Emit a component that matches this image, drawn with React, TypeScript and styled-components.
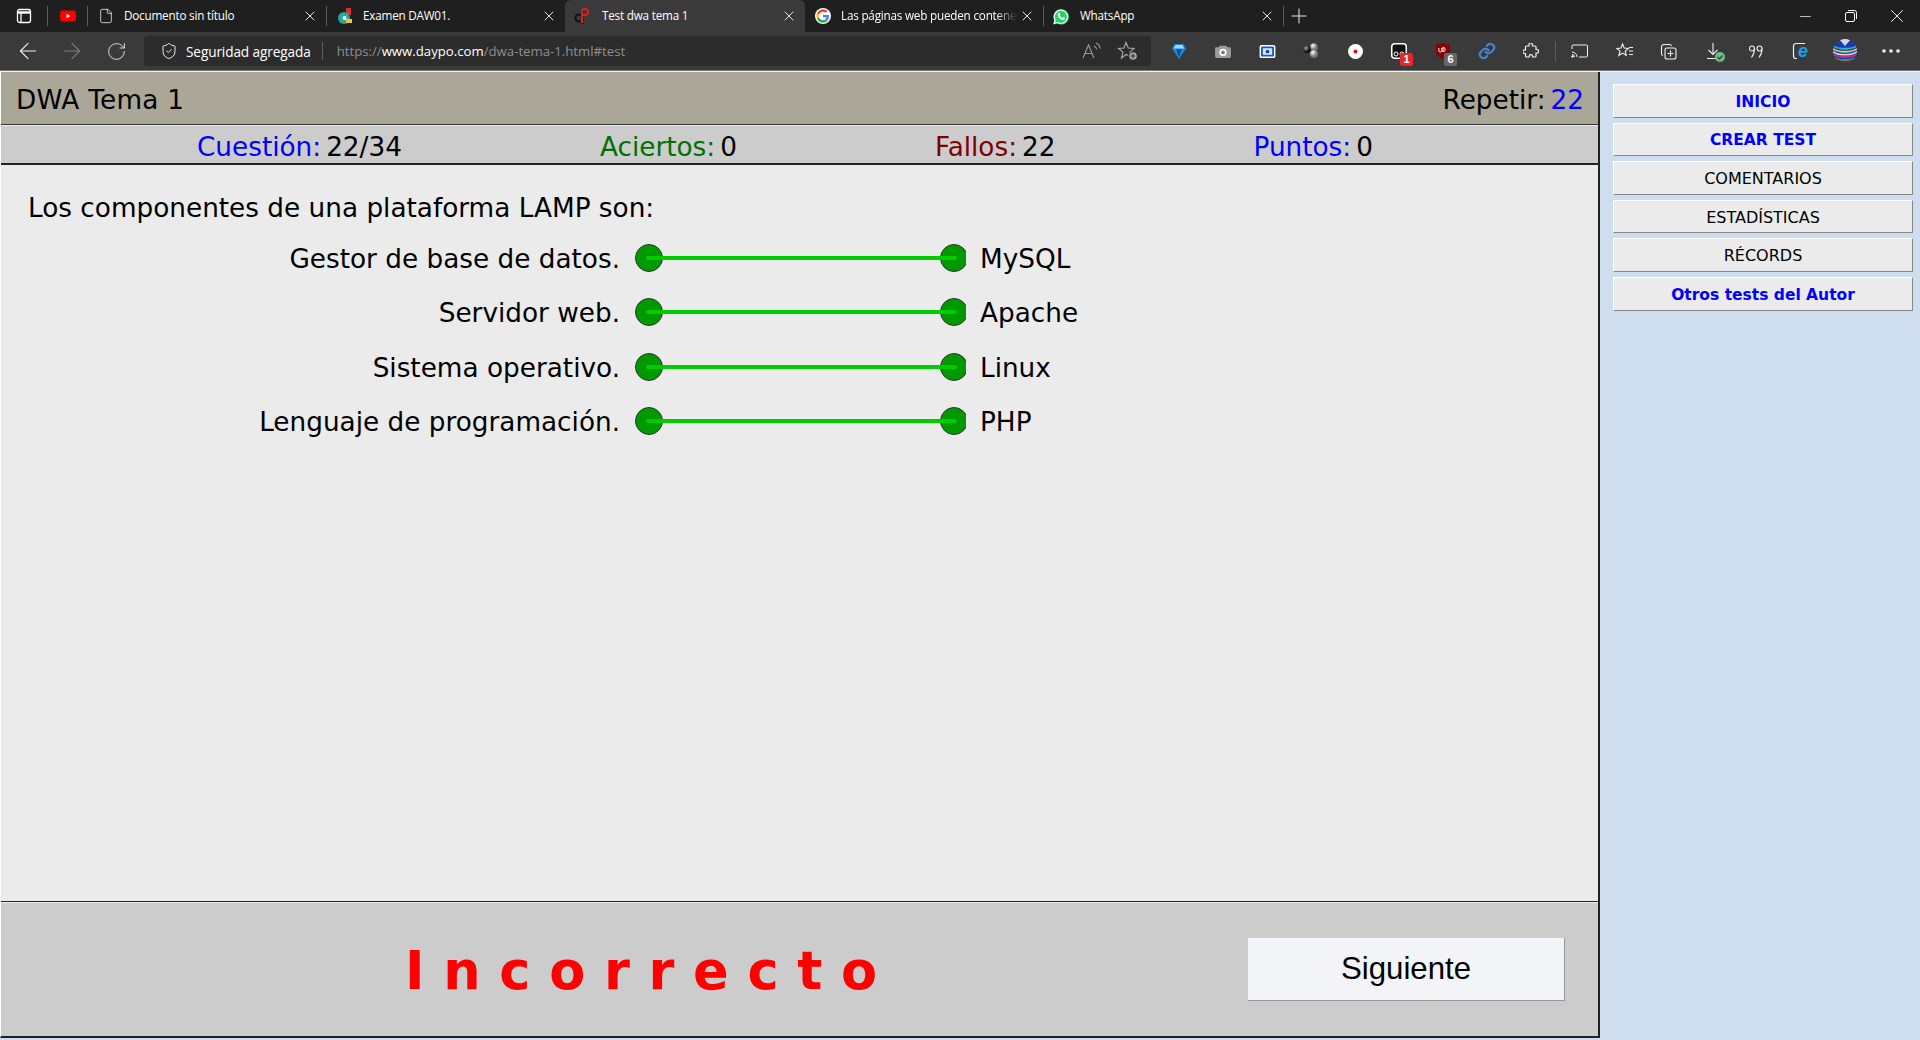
import React from "react";
import styled, { createGlobalStyle } from "styled-components";
import { ArrowLeft, ArrowRight, RotateCw, ShieldCheck, File, X, Plus, Minus, MoreHorizontal } from "lucide-react";

const Global = createGlobalStyle`
  html, body { margin: 0; padding: 0; height: 1040px; overflow: hidden; background: #cfdeee; }
  #root { height: 1040px; }
  * { box-sizing: border-box; }
`;

const Shell = styled.div`
  width: 1920px; height: 1040px; display: flex; flex-direction: column;
  font-family: "Open Sans", "Noto Sans", sans-serif;
`;

/* ---------- tab strip ---------- */
const TabStrip = styled.div`
  height: 32px; background: #1f1f1f; display: flex; align-items: stretch; color: #fff; flex: none;
`;
const StripIcon = styled.div<{ $w: number }>`
  width: ${p => p.$w}px; display: flex; align-items: center; justify-content: center; flex: none;
`;
const Sep = styled.div`
  width: 1px; height: 20px; background: #5c5c5c; align-self: center; flex: none;
`;
const Tab = styled.div<{ $w: number; $active?: boolean; $pad: number }>`
  width: ${p => p.$w}px; flex: none; display: flex; align-items: center; padding-left: ${p => p.$pad}px;
  background: ${p => (p.$active ? "#3a3a3a" : "transparent")};
  border-radius: ${p => (p.$active ? "6px 6px 0 0" : "0")};
`;
const TabIcon = styled.div`
  width: 16px; height: 16px; flex: none; display: flex; align-items: center; justify-content: center;
`;
const TabTitle = styled.div<{ $gap: number; $fade?: boolean }>`
  margin-left: ${p => p.$gap}px; flex: 1; min-width: 0; font-size: 11.7px; line-height: 16px; letter-spacing: -0.2px; color: #fff; white-space: nowrap; overflow: hidden;
  padding-bottom: 2px;
  ${p => (p.$fade ? "margin-right: -6px; -webkit-mask-image: linear-gradient(90deg,#000 88%,transparent 100%);" : "")}
`;
const TabClose = styled.div`
  width: 32px; flex: none; display: flex; align-items: center; justify-content: center; color: #e6e6e6;
`;
const NewTab = styled.div`
  width: 30px; display: flex; align-items: center; justify-content: center; flex: none;
`;
const WinControls = styled.div`
  margin-left: auto; display: flex; align-items: center; flex: none;
`;
const WinBtn = styled.div`
  width: 46px; height: 32px; display: flex; align-items: center; justify-content: center; color: #fff;
`;

/* ---------- toolbar ---------- */
const Toolbar = styled.div`
  height: 38px; background: #3a3a3a; display: flex; align-items: flex-start; padding: 4px 0 0 6px; flex: none;
`;
const ToolBtn = styled.div<{ $dim?: boolean; $nudge?: number }>`
  width: 44px; height: 30px; flex: none; display: flex; align-items: center; justify-content: center;
  color: ${p => (p.$dim ? "#7d7d7d" : "#f0f0f0")}; position: relative;
  padding-left: ${p => Math.max(p.$nudge ?? 0, 0)}px;
  padding-right: ${p => Math.max(-(p.$nudge ?? 0), 0)}px;
`;
const AddressBar = styled.div`
  width: 1007px; height: 30px; margin: 0 6px; background: #2c2c2c; border-radius: 4px; display: flex; align-items: center;
  padding-left: 16px; flex: none;
`;
const AddressSecurity = styled.span`
  color: #fff; font-size: 13.6px; letter-spacing: -0.1px; margin-left: 8px; white-space: nowrap;
`;
const AddressSep = styled.div`
  width: 1px; height: 18px; background: #5e5e5e; margin: 0 14px 0 11px; flex: none;
`;
const Url = styled.span`
  color: #8f8f8f; font-size: 13.2px; white-space: nowrap;
  b { color: #fff; font-weight: 400; }
`;
const AddressEnd = styled.div`
  margin-left: auto; display: flex; align-items: center; color: #9a9a9a; padding-right: 5px;
`;
const AddressIcon = styled.div`
  width: 36px; height: 30px; display: flex; align-items: center; justify-content: center;
`;
const ToolSep = styled.div`
  width: 1px; height: 20px; background: #5c5c5c; margin: 5px 3px 0 2px; flex: none;
`;
const Badge = styled.span<{ $bg: string }>`
  position: absolute; right: 8px; bottom: 0; width: 13px; height: 13px; background: ${p => p.$bg}; color: #fff;
  font: 700 11px/13px "Liberation Sans", sans-serif; text-align: center; border-radius: 2px;
`;
const DoneMark = styled.svg`
  position: absolute; right: 10px; bottom: 4px;
`;
const ChromeEdge = styled.div`
  height: 2px; flex: none; background: #f2f2f2; border-top: 1px solid #777;
`;

/* ---------- page ---------- */
const Page = styled.div`
  flex: 1; min-height: 0; display: flex; background: #cfdeee; font-family: "DejaVu Sans", Verdana, sans-serif; color: #000;
`;
const Test = styled.main`
  width: 1600px; flex: none; display: flex; flex-direction: column; height: 966px;
  border-left: 1px solid #fff; border-right: 2px solid #222; border-bottom: 2px solid #222;
`;
const TitleBar = styled.header`
  height: 53px; flex: none; background: #aba798; border-bottom: 1px solid #333; display: flex; align-items: center;
  justify-content: space-between; padding: 4px 14px 0 15px; font-size: 26.3px; line-height: 1;
`;
const Label = styled.span<{ $c: string }>`
  color: ${p => p.$c}; margin-right: 5px;
`;
const TitleText = styled.span`
  letter-spacing: 0.25px;
`;
const RepeatBox = styled.span``;
const Repeat = styled.span`
  color: #0000ff;
`;
const StatsBar = styled.div`
  height: 40px; flex: none; background: #ccc; border-top: 1px solid #eee; border-bottom: 2px solid #222; display: flex; align-items: center;
  gap: 198px; padding: 5px 0 0 196px; font-size: 26.3px; white-space: nowrap;
`;
const Stat = styled.span``;
const Content = styled.section`
  flex: 1; min-height: 0; background: #ebebeb; padding: 25px 0 0 27px; font-size: 26.3px; line-height: 36px;
`;
const Question = styled.div`
  height: 36px;
`;
const Pairs = styled.div`
  margin: 14.5px 0 0 -27px; display: flex; flex-direction: column; gap: 18.5px;
`;
const Pair = styled.div`
  display: flex; align-items: center; height: 36px;
`;
const PairLeft = styled.div`
  width: 619px; text-align: right; flex: none; white-space: nowrap;
`;
const PairRight = styled.div`
  margin-left: 14px; white-space: nowrap;
`;
const Connector = styled.svg`
  width: 332px; height: 30px; margin-left: 14px; flex: none; display: block; transform: translateY(-1px);
`;
const Footer = styled.footer`
  height: 135px; flex: none; background: #ccc; border-top: 1px solid #222; display: flex; align-items: center;
  padding-right: 33px; box-shadow: inset 0 1px 0 #eee;
`;
const Verdict = styled.div`
  flex: 1; padding: 4px 0 0 404px; color: #ff0000; font: 700 52.5px/1 "DejaVu Sans", sans-serif; letter-spacing: 18.7px; white-space: nowrap;
`;
const Next = styled.div`
  width: 317px; height: 63px; margin-top: 1px; background: #f2f4f8; border-right: 1px solid #999; border-bottom: 1px solid #999;
  display: flex; align-items: center; justify-content: center; font: 400 31.2px "Liberation Sans", sans-serif; color: #000;
`;
const Sidebar = styled.nav`
  flex: 1; display: flex; flex-direction: column; gap: 5px; padding: 12px 7px 0 13px;
`;
const MenuButton = styled.div<{ $strong?: boolean; $h: number }>`
  height: ${p => p.$h}px; background: #ebebeb; border-top: 1px solid #fff; border-left: 1px solid #fff;
  border-right: 1px solid #888; border-bottom: 1px solid #888; padding-top: 1px;
  display: flex; align-items: center; justify-content: center;
  font-size: ${p => (p.$strong ? "15.5px" : "16px")};
  color: ${p => (p.$strong ? "#0000ff" : "#000")}; font-weight: ${p => (p.$strong ? 700 : 400)};
`;

/* ---------- small drawn logos ---------- */
const SidebarToggle = () => (
  <svg width="16" height="16" viewBox="0 0 16 16" fill="none" stroke="#fff" strokeWidth="1.3">
    <rect x="1.500" y="1.500" width="13" height="13" rx="2" /><path d="M1.500 4.500h13" strokeWidth="2.400" /><path d="M5 5v9" />
  </svg>
);
const YouTube = () => (
  <svg width="16" height="16" viewBox="0 0 16 16">
    <rect x="0" y="2.500" width="16" height="11" rx="3" fill="#f00" /><path d="M6.500 5.700v4.600l4-2.300z" fill="#fff" />
  </svg>
);
const Moodle = () => (
  <svg width="16" height="16" viewBox="0 0 16 16">
    <path d="M9 0h5v7H9z" fill="#d62f2f" /><circle cx="7" cy="10" r="6" fill="#25a79a" />
    <circle cx="7.500" cy="10" r="2" fill="#fff" /><path d="M9 11h6v4H9z" fill="#f4c430" />
  </svg>
);
const DaypoLogo = () => (
  <svg width="16" height="18" viewBox="0 0 16 18" fill="none">
    <circle cx="5" cy="11" r="3.500" stroke="#111" strokeWidth="2" /><path d="M8.500 3v14" stroke="#111" strokeWidth="1.800" />
    <circle cx="11" cy="5" r="3.200" stroke="#e01b24" strokeWidth="2" /><path d="M8 5v11" stroke="#e01b24" strokeWidth="2" />
  </svg>
);
const GoogleLogo = () => (
  <svg width="16" height="16" viewBox="0 0 48 48">
    <circle cx="24" cy="24" r="24" fill="#fff" />
    <path fill="#ea4335" d="M24 11c3.300 0 6.300 1.200 8.600 3.300l5-5A20 20 0 0 0 6.100 15l6 4.600C13.700 14.600 18.400 11 24 11z" />
    <path fill="#4285f4" d="M42 24.500c0-1.400-.1-2.400-.4-3.500H24v7h10.200c-.5 2.300-1.900 4.300-4 5.600l6 4.600C40 35.100 42 30.200 42 24.500z" />
    <path fill="#fbbc05" d="M12.100 28.400a11.800 11.800 0 0 1 0-8.800l-6-4.600a20 20 0 0 0 0 18z" />
    <path fill="#34a853" d="M24 44c5.400 0 9.900-1.800 13.200-4.800l-6.400-5c-1.800 1.200-4 1.900-6.800 1.900-5.600 0-10.300-3.600-11.900-8.600l-6 4.600A20 20 0 0 0 24 44z" />
  </svg>
);
const WhatsApp = () => (
  <svg width="17" height="17" viewBox="0 0 16 16">
    <path d="M0 16l1.200-4.200A7.800 7.800 0 1 1 4.200 15z" fill="#25d366" />
    <path d="M1.300 14.700l.9-3A6.600 6.600 0 1 1 4.500 14z" fill="#25d366" stroke="#fff" strokeWidth="1.100" />
    <path d="M5.600 4.300c-.7.600-1 1.500-.7 2.600.6 2.100 2.200 3.800 4.300 4.500 1.100.3 2 0 2.600-.8l.1-1.100-1.800-.9-.8.900c-1.100-.4-2.100-1.400-2.600-2.500l.7-.8L6.600 4.300z" fill="#fff" />
  </svg>
);
const ReadAloud = () => (
  <svg width="22" height="20" viewBox="0 0 22 20" fill="none" stroke="#9a9a9a" strokeWidth="1.100">
    <path d="M2 17 7.500 4 13 17M4 12.500h7" /><path d="M13 5c1.500.6 2.500 2 2.800 3.500M15 2c2.300 1 3.800 3 4.200 5.500" />
  </svg>
);
const FavAdd = () => (
  <svg width="22" height="22" viewBox="0 0 22 22" fill="none" stroke="#a8a8a8" strokeWidth="1.100">
    <path d="M9 2.500 11.300 8l5.700.4-4.300 3.700 1.200 4.400L9 14.500 4.400 18l1.500-5.800L1.500 8.400 7 8z" />
    <circle cx="16" cy="16" r="4.300" fill="#a8a8a8" stroke="#2c2c2c" /><path d="M16 13.800v4.400M13.800 16h4.400" stroke="#2c2c2c" />
  </svg>
);
const Diamond = () => (
  <svg width="14" height="16" viewBox="0 0 16 18"><path d="M3 1h10l3 5-8 12L0 6z" fill="#1e88d8" /><path d="M4 2h8l2 4H2z" fill="#9adcf8" /><path d="M5 7h6l-3 9z" fill="#0b4d9e" /></svg>
);
const Camera = () => (
  <svg width="16" height="14" viewBox="0 0 17 15"><path d="M5 2h7l1 1.500h2.500A1.500 1.500 0 0 1 17 5v8.500A1.500 1.500 0 0 1 15.500 15h-14A1.500 1.500 0 0 1 0 13.500V5a1.500 1.500 0 0 1 1.500-1.500H4z" fill="#9c9c9c" /><circle cx="8.500" cy="9" r="3.800" fill="#fff" /><circle cx="8.500" cy="9" r="2" fill="#777" /></svg>
);
const BlueScreen = () => (
  <svg width="17" height="13" viewBox="0 0 17 14"><rect width="17" height="14" rx="2" fill="#fff" /><rect x="1.500" y="1.500" width="14" height="11" rx="1" fill="#1558d6" /><rect x="3.500" y="3.500" width="10" height="7" fill="#dbe7ff" /><circle cx="8.500" cy="7" r="2" fill="#1140b8" /></svg>
);
const Balls = () => (
  <svg width="18" height="16" viewBox="0 0 18 16"><defs><radialGradient id="gb" cx="35%" cy="30%"><stop offset="0" stopColor="#fff" /><stop offset="1" stopColor="#777" /></radialGradient><radialGradient id="gk" cx="35%" cy="30%"><stop offset="0" stopColor="#aaa" /><stop offset="1" stopColor="#111" /></radialGradient></defs><circle cx="12" cy="4" r="3.800" fill="url(#gb)" /><circle cx="12" cy="11" r="4" fill="url(#gb)" /><circle cx="5" cy="6.500" r="3.600" fill="url(#gk)" /></svg>
);
const RecordIcon = () => (
  <svg width="15" height="15" viewBox="0 0 15 15"><circle cx="7.500" cy="7.500" r="7.500" fill="#fff" /><circle cx="7.500" cy="7.500" r="2" fill="#e01020" /></svg>
);
const BlackBox = () => (
  <svg width="16" height="16" viewBox="0 0 16 16" fill="none"><rect x=".75" y=".75" width="14.500" height="14.500" rx="3" fill="#111" stroke="#fff" strokeWidth="1.500" /><circle cx="5" cy="11" r="2" stroke="#fff" /><circle cx="11" cy="11" r="2" stroke="#fff" /></svg>
);
const UBlock = () => (
  <svg width="14" height="16" viewBox="0 0 14 16"><path d="M7 0l7 2v6c0 4-3 6.500-7 8-4-1.500-7-4-7-8V2z" fill="#800" /><path d="M2.800 5v2.500a1.500 1.500 0 0 0 3 0V5M7 4v5M7 4.800h1.200a2 2 0 0 1 0 3.500H7" fill="none" stroke="#fff" strokeWidth="1" /></svg>
);
const LinkIcon = () => (
  <svg width="18" height="18" viewBox="0 0 24 24" fill="none" stroke="#3d8be0" strokeWidth="2.800" strokeLinecap="round"><path d="M10 13a5 5 0 0 0 7.500.5l3-3a5 5 0 0 0-7-7l-1.700 1.700" /><path d="M14 11a5 5 0 0 0-7.500-.5l-3 3a5 5 0 0 0 7 7l1.700-1.700" /></svg>
);
const Puzzle = () => (
  <svg width="16" height="16" viewBox="0 0 16 16" fill="none" stroke="#f0f0f0" strokeWidth="1.200"><path d="M6 1.500a1.700 1.700 0 0 1 3.400 0c0 .5-.1 1 .1 1.500h2.500a1 1 0 0 1 1 1v2.500h.8a1.800 1.800 0 0 1 0 3.600H13V13a1 1 0 0 1-1 1H9.600v-.7a1.700 1.700 0 0 0-3.400 0v.7H3.500a1 1 0 0 1-1-1v-2.500h-.8a1.800 1.800 0 0 1 0-3.600h.8V4a1 1 0 0 1 1-1H6z" /></svg>
);
const Cast = () => (
  <svg width="17" height="14" viewBox="0 0 17 14" fill="none" stroke="#f0f0f0"><path d="M1 5V2a1 1 0 0 1 1-1h13.500a1 1 0 0 1 1 1v10a1 1 0 0 1-1 1H8" /><path d="M1 8a5 5 0 0 1 5 5M1 10.500A2.500 2.500 0 0 1 3.500 13" /><circle cx="1.500" cy="12.500" r=".8" fill="#f0f0f0" /></svg>
);
const Favorites = () => (
  <svg width="18" height="16" viewBox="0 0 18 16" fill="none" stroke="#f0f0f0" strokeWidth="1.100"><path d="M6.500 1 8.200 5l4.300.4-3.300 2.700 1 4.300-3.700-2.300L2.800 12.500 4 8.100.8 5.400 5 5z" /><path d="M13 4.500h4M13 8h4M13 11.500h4" /></svg>
);
const Collections = () => (
  <svg width="17" height="17" viewBox="0 0 17 17" fill="none" stroke="#f0f0f0" strokeWidth="1.100"><rect x="5" y="5" width="11" height="11" rx="2" /><path d="M3 12.500A2 2 0 0 1 1.500 10.500V4A2.500 2.500 0 0 1 4 1.500h5.500A2 2 0 0 1 11.500 3" /><path d="M10.500 7.500v6M7.500 10.500h6" /></svg>
);
const DownloadDone = () => (
  <>
    <svg width="14" height="18" viewBox="0 0 14 18" fill="none" stroke="#f0f0f0" strokeWidth="1.100"><path d="M7 1v11M2.500 8 7 12.500 11.500 8M1 16.500h9" /></svg>
    <DoneMark width="10" height="10" viewBox="0 0 10 10"><circle cx="5" cy="5" r="5" fill="#6fbd80" /><path d="M2.500 5l2 2 3-3.500" stroke="#2d4a34" strokeWidth="1.200" fill="none" /></DoneMark>
  </>
);
const Quote = () => (
  <svg width="14" height="13" viewBox="0 0 14 13" fill="none" stroke="#f0f0f0" strokeWidth="1.100"><circle cx="3" cy="3.500" r="2.500" /><path d="M5.500 3.500c0 3.500-1 6.500-3 9" /><circle cx="10.500" cy="3.500" r="2.500" /><path d="M13 3.500c0 3.500-1 6.500-3 9" /></svg>
);
const IeIcon = () => (
  <svg width="20" height="20" viewBox="0 0 20 20" fill="none"><path d="M14 2.500H5A2.500 2.500 0 0 0 2.500 5v10A2.500 2.500 0 0 0 5 17.500h1" stroke="#f0f0f0" strokeWidth="1.200" /><text x="12" y="16" textAnchor="middle" fontSize="18" fontWeight="700" fontStyle="italic" fill="#1ba1e2" fontFamily="Liberation Sans, sans-serif">e</text></svg>
);
const Avatar = () => (
  <svg width="24" height="24" viewBox="0 0 24 24" fill="none"><defs><clipPath id="av"><circle cx="12" cy="12" r="12" /></clipPath></defs><g clipPath="url(#av)"><rect width="24" height="24" fill="#1c3aa8" /><path d="M6 0l6 7 6-7z" fill="#cfd8ea" /><path d="M-1 6c6 5 20 5 26 0" stroke="#27b6c9" strokeWidth="1.800" /><path d="M-1 9c6 5 20 5 26 0" stroke="#e8c94a" strokeWidth="1.800" /><path d="M-1 12c6 5 20 5 26 0" stroke="#d8d0e8" strokeWidth="1.600" /><path d="M-1 15c6 4 20 4 26 0" stroke="#c02a8a" strokeWidth="1.800" /><path d="M-1 18c6 4 20 4 26 0" stroke="#2aa655" strokeWidth="2" /><path d="M3 21c5 3 13 3 18 0" stroke="#7a2a2a" strokeWidth="2.500" /></g></svg>
);
const Restore = () => (
  <svg width="12" height="12" viewBox="0 0 12 12" fill="none" stroke="#fff"><rect x=".5" y="2.500" width="9" height="9" rx="1.500" /><path d="M3 .5h6.500a2 2 0 0 1 2 2V9" /></svg>
);

const pairs = [
  ["Gestor de base de datos.", "MySQL"],
  ["Servidor web.", "Apache"],
  ["Sistema operativo.", "Linux"],
  ["Lenguaje de programación.", "PHP"],
];
const menu = [
  { t: "INICIO", s: true, h: 34 }, { t: "CREAR TEST", s: true, h: 33 }, { t: "COMENTARIOS", s: false, h: 34 },
  { t: "ESTADÍSTICAS", s: false, h: 33 }, { t: "RÉCORDS", s: false, h: 34 }, { t: "Otros tests del Autor", s: true, h: 34 },
];

const Close = () => <TabClose><X size={16} strokeWidth={1.5} /></TabClose>;

export default function App() {
  return (
    <Shell>
      <Global />
      <TabStrip>
        <StripIcon $w={47}><SidebarToggle /></StripIcon>
        <Sep />
        <StripIcon $w={39}><YouTube /></StripIcon>
        <Sep />
        <Tab $w={238} $pad={10}>
          <TabIcon><File size={18} strokeWidth={1.1} color="#fff" /></TabIcon>
          <TabTitle $gap={10}>Documento sin título</TabTitle><Close />
        </Tab>
        <Sep />
        <Tab $w={238} $pad={10}>
          <TabIcon><Moodle /></TabIcon><TabTitle $gap={10}>Examen DAW01.</TabTitle><Close />
        </Tab>
        <Tab $w={240} $active $pad={9}>
          <TabIcon><DaypoLogo /></TabIcon><TabTitle $gap={12}>Test dwa tema 1</TabTitle><Close />
        </Tab>
        <Tab $w={238} $pad={10}>
          <TabIcon><GoogleLogo /></TabIcon><TabTitle $gap={10} $fade>Las páginas web pueden contene</TabTitle><Close />
        </Tab>
        <Sep />
        <Tab $w={239} $pad={9}>
          <TabIcon><WhatsApp /></TabIcon><TabTitle $gap={11}>WhatsApp</TabTitle><Close />
        </Tab>
        <Sep />
        <NewTab><Plus size={24} strokeWidth={0.9} color="#fff" /></NewTab>
        <WinControls>
          <WinBtn><Minus size={17} strokeWidth={1} /></WinBtn>
          <WinBtn><Restore /></WinBtn>
          <WinBtn><X size={22} strokeWidth={1} /></WinBtn>
        </WinControls>
      </TabStrip>
      <Toolbar>
        <ToolBtn><ArrowLeft size={26} strokeWidth={1} /></ToolBtn>
        <ToolBtn $dim><ArrowRight size={26} strokeWidth={1} /></ToolBtn>
        <ToolBtn><RotateCw size={21} strokeWidth={1} /></ToolBtn>
        <AddressBar>
          <ShieldCheck size={18} strokeWidth={1.2} color="#fff" />
          <AddressSecurity>Seguridad agregada</AddressSecurity>
          <AddressSep />
          <Url>https://<b>www.daypo.com</b>/dwa-tema-1.html#test</Url>
          <AddressEnd>
            <AddressIcon><ReadAloud /></AddressIcon>
            <AddressIcon><FavAdd /></AddressIcon>
          </AddressEnd>
        </AddressBar>
        <ToolBtn><Diamond /></ToolBtn>
        <ToolBtn><Camera /></ToolBtn>
        <ToolBtn><BlueScreen /></ToolBtn>
        <ToolBtn><Balls /></ToolBtn>
        <ToolBtn><RecordIcon /></ToolBtn>
        <ToolBtn><BlackBox /><Badge $bg="#e8252a">1</Badge></ToolBtn>
        <ToolBtn><UBlock /><Badge $bg="#666">6</Badge></ToolBtn>
        <ToolBtn><LinkIcon /></ToolBtn>
        <ToolBtn><Puzzle /></ToolBtn>
        <ToolSep />
        <ToolBtn $nudge={-3}><Cast /></ToolBtn>
        <ToolBtn><Favorites /></ToolBtn>
        <ToolBtn $nudge={-1}><Collections /></ToolBtn>
        <ToolBtn $nudge={-1}><DownloadDone /></ToolBtn>
        <ToolBtn $nudge={-3}><Quote /></ToolBtn>
        <ToolBtn $nudge={-1}><IeIcon /></ToolBtn>
        <ToolBtn><Avatar /></ToolBtn>
        <ToolBtn $nudge={4}><MoreHorizontal size={24} strokeWidth={1.6} /></ToolBtn>
      </Toolbar>
      <ChromeEdge />
      <Page>
        <Test>
          <TitleBar>
            <TitleText>DWA Tema 1</TitleText>
            <RepeatBox><Label $c="#000">Repetir:</Label><Repeat>22</Repeat></RepeatBox>
          </TitleBar>
          <StatsBar>
            <Stat><Label $c="#0000ff">Cuestión:</Label>22/34</Stat>
            <Stat><Label $c="#007000">Aciertos:</Label>0</Stat>
            <Stat><Label $c="#800000">Fallos:</Label>22</Stat>
            <Stat><Label $c="#0000ff">Puntos:</Label>0</Stat>
          </StatsBar>
          <Content>
            <Question>Los componentes de una plataforma LAMP son:</Question>
            <Pairs>
              {pairs.map(([l, r]) => (
                <Pair key={l}>
                  <PairLeft>{l}</PairLeft>
                  <Connector viewBox="0 0 332 30">
                    <circle cx="15" cy="15" r="13.500" fill="#009900" stroke="#333" strokeWidth="1" />
                    <circle cx="320" cy="15" r="13.500" fill="#009900" stroke="#333" strokeWidth="1" />
                    <line x1="14" y1="15" x2="321" y2="15" stroke="#00cc00" strokeWidth="4" strokeLinecap="round" />
                  </Connector>
                  <PairRight>{r}</PairRight>
                </Pair>
              ))}
            </Pairs>
          </Content>
          <Footer>
            <Verdict>Incorrecto</Verdict>
            <Next>Siguiente</Next>
          </Footer>
        </Test>
        <Sidebar>
          {menu.map(m => <MenuButton key={m.t} $strong={m.s} $h={m.h}>{m.t}</MenuButton>)}
        </Sidebar>
      </Page>
    </Shell>
  );
}
